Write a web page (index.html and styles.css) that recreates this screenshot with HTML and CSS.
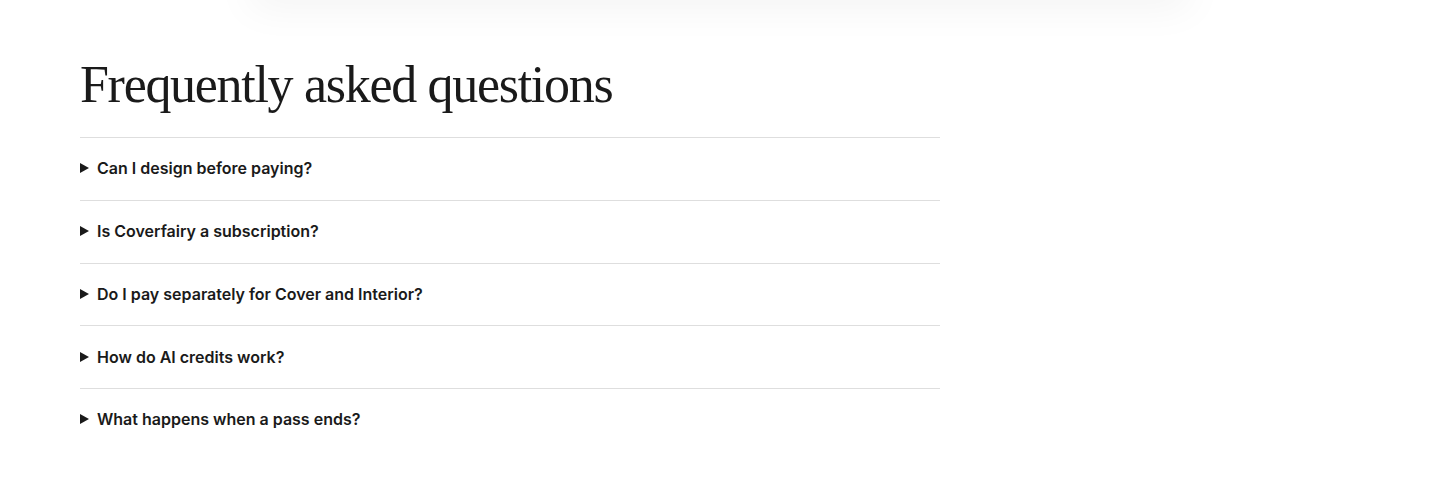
FILE: index.html
```html
<!DOCTYPE html>
<html lang="en">
<head>
  <meta charset="UTF-8">
  <meta name="viewport" content="width=device-width, initial-scale=1.0">
  <title>FAQ</title>
  <link rel="stylesheet" href="styles.css">
</head>
<body>
  <div class="preview-card"></div>

  <section class="faq">
    <h2 class="faq-title">Frequently asked questions</h2>

    <div class="faq-list">
      <details class="faq-item">
        <summary>Can I design before paying?</summary>
      </details>
      <details class="faq-item">
        <summary>Is Coverfairy a subscription?</summary>
      </details>
      <details class="faq-item">
        <summary>Do I pay separately for Cover and Interior?</summary>
      </details>
      <details class="faq-item">
        <summary>How do AI credits work?</summary>
      </details>
      <details class="faq-item">
        <summary>What happens when a pass ends?</summary>
      </details>
    </div>
  </section>
</body>
</html>
```

FILE: styles.css
```css
html, body {
  margin: 0;
  padding: 0;
  background-color: #fff;
  color: #1a1a1a;
}

body {
  overflow: hidden;
}

.preview-card {
  width: 940px;
  height: 40px;
  margin: -40px auto 0;
  background-color: #fff;
  box-shadow: 0 8px 40px rgba(0, 0, 0, 0.05);
}

.faq {
  padding: 57px 80px 0;
  width: 860px;
}

.faq-title {
  margin: 0 0 24px;
  font-family: "Liberation Serif", "Times New Roman", serif;
  font-weight: 400;
  font-size: 52px;
  line-height: 56px;
  letter-spacing: -1.3px;
}

.faq-item {
  border-top: 1px solid #dedede;
}

.faq-item summary {
  display: flex;
  align-items: center;
  gap: 8px;
  height: 61.75px;
  padding-bottom: 1px;
  box-sizing: border-box;
  list-style: none;
  cursor: pointer;
  font-family: Inter, "Noto Sans", sans-serif;
  font-weight: 600;
  font-size: 16px;
}

.faq-item summary::-webkit-details-marker {
  display: none;
}

.faq-item summary::before {
  content: "";
  width: 0;
  height: 0;
  border-top: 5px solid transparent;
  border-bottom: 5px solid transparent;
  border-left: 9px solid #1a1a1a;
}
```
